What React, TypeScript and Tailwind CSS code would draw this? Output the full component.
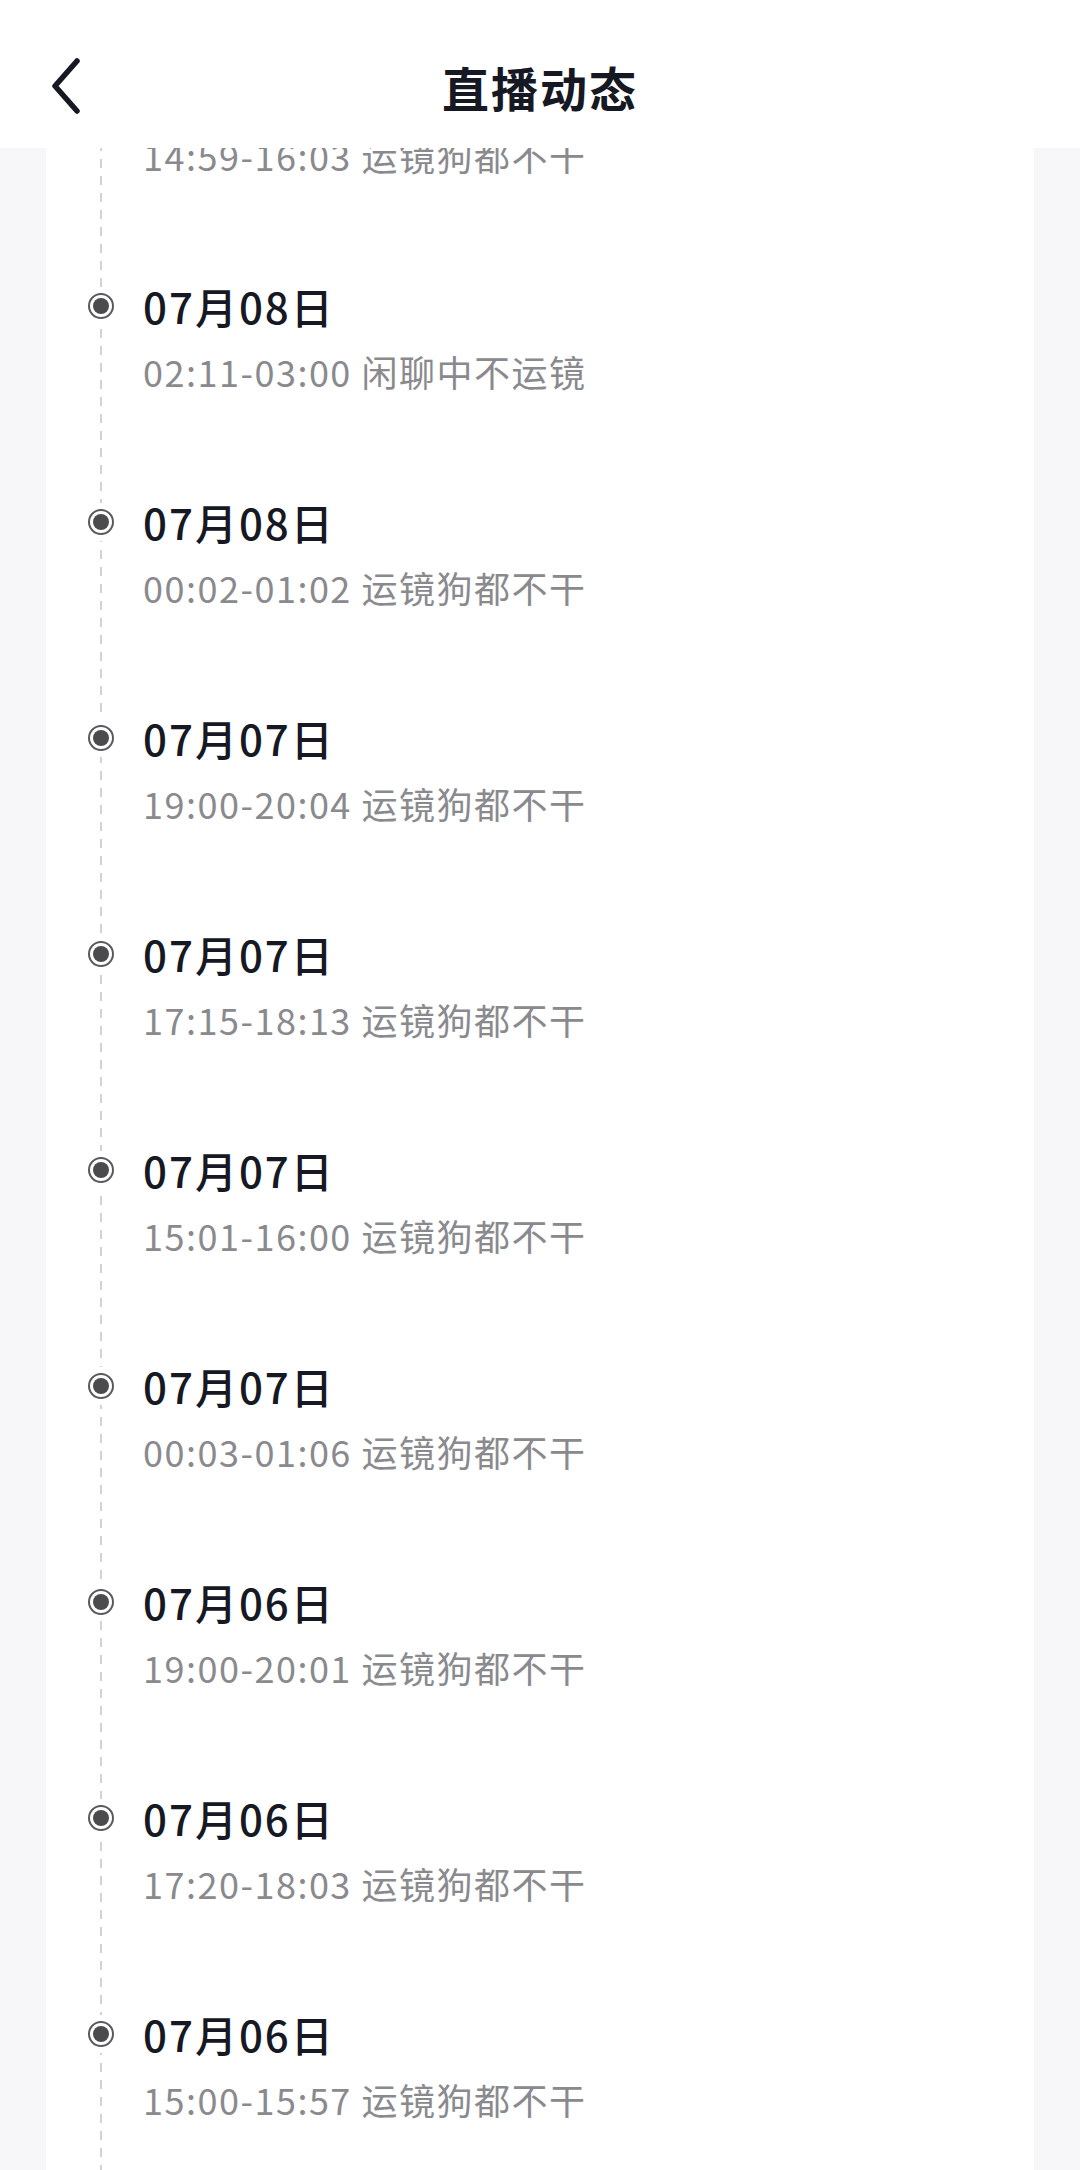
import React from 'react';

interface LiveRecord {
  date: string;
  time: string;
  title: string;
}

const records: LiveRecord[] = [
  { date: '07月08日', time: '14:59-16:03', title: '运镜狗都不干' },
  { date: '07月08日', time: '02:11-03:00', title: '闲聊中不运镜' },
  { date: '07月08日', time: '00:02-01:02', title: '运镜狗都不干' },
  { date: '07月07日', time: '19:00-20:04', title: '运镜狗都不干' },
  { date: '07月07日', time: '17:15-18:13', title: '运镜狗都不干' },
  { date: '07月07日', time: '15:01-16:00', title: '运镜狗都不干' },
  { date: '07月07日', time: '00:03-01:06', title: '运镜狗都不干' },
  { date: '07月06日', time: '19:00-20:01', title: '运镜狗都不干' },
  { date: '07月06日', time: '17:20-18:03', title: '运镜狗都不干' },
  { date: '07月06日', time: '15:00-15:57', title: '运镜狗都不干' },
];

function TimelineDot() {
  return (
    <div className="flex h-[26px] w-[26px] items-center justify-center rounded-full border-[2px] border-[#5a5a5e] bg-white shadow-[0_0_0_6px_white]">
      <div className="h-[16px] w-[16px] rounded-full bg-[#4a4a4f]" />
    </div>
  );
}

function TimelineItem({ record }: { record: LiveRecord }) {
  return (
    <div className="relative h-[216px] pt-[22px]">
      <div className="flex h-[56px] items-center">
        <div className="flex w-[97px] pl-[42px]">
          <TimelineDot />
        </div>
        <span className="text-[42px] font-medium leading-[56px] tracking-[2px] text-[#161823]">
          {record.date}
        </span>
      </div>
      <div className="mt-[13px] pl-[97px] text-[36px] leading-[48px] tracking-[1.5px] text-[#8a8a8e]">
        {record.time} {record.title}
      </div>
    </div>
  );
}

export default function App() {
  return (
    <div className="relative h-[2170px] overflow-hidden bg-[#f7f7f9] font-['Noto_Sans_CJK_SC','Noto_Sans',sans-serif]">
      {/* Header */}
      <div className="sticky top-0 z-10 h-[148px] bg-white pt-[42px]">
        <div className="grid h-[88px] grid-cols-[120px_1fr_120px] items-center">
          <div className="pl-[50px]">
            <svg width="32" height="56" viewBox="0 0 32 56" fill="none">
              <path
                d="M27 3 L5 28 L27 53"
                stroke="#161823"
                strokeWidth="5.5"
                strokeLinecap="round"
                strokeLinejoin="round"
              />
            </svg>
          </div>
          <h1 className="text-center text-[47px] font-semibold leading-none tracking-[2px] text-[#161823]">
            直播动态
          </h1>
          <div />
        </div>
      </div>

      {/* Timeline card */}
      <div className="relative mx-[46px] -mt-[108px] bg-white">
        <div className="absolute bottom-0 left-[54px] top-0 w-[2px] bg-[repeating-linear-gradient(to_bottom,#d2d2d6_0_9px,transparent_9px_17px)]" />
        {records.map((record, i) => (
          <TimelineItem key={i} record={record} />
        ))}
      </div>
    </div>
  );
}
